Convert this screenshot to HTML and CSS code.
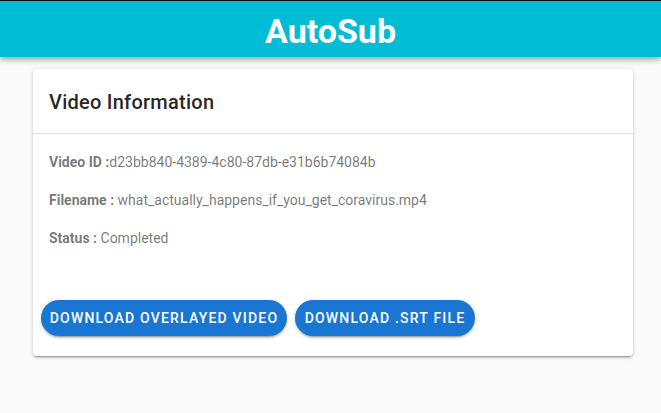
FILE: index.html
```html
<!DOCTYPE html>
<html>
<head>
<meta charset="utf-8">
<link rel="stylesheet" href="styles.css">
</head>
<body>
<header class="appbar"><h1 class="brand">AutoSub</h1></header>
<main class="content">
  <section class="card">
    <div class="card-title">Video Information</div>
    <div class="card-text">
      <p><b>Video ID :</b>d23bb840-4389-4c80-87db-e31b6b74084b</p>
      <p><b>Filename :</b> what_actually_happens_if_you_get_coravirus.mp4</p>
      <p><b>Status :</b> Completed</p>
    </div>
    <div class="card-actions">
      <button class="btn btn-video">Download Overlayed Video</button>
      <button class="btn btn-srt">Download .srt file</button>
    </div>
  </section>
</main>
</body>
</html>
```
FILE: styles.css
```css
html, body { margin: 0; padding: 0; }
body {
  background: #fafafa;
  font-family: Roboto, "Noto Sans", sans-serif;
  height: 413px;
  overflow: hidden;
}
.appbar {
  background: #00bcd4;
  border-top: 1px solid #111;
  height: 56px;
  display: flex;
  align-items: center;
  justify-content: center;
  box-shadow: 0 2px 4px -1px rgba(0,0,0,.2), 0 4px 5px 0 rgba(0,0,0,.14), 0 1px 10px 0 rgba(0,0,0,.12);
  position: relative;
}
.brand {
  margin: 0;
  color: #fff;
  font-size: 34px;
  font-weight: 700;
  line-height: 1;
  padding-top: 3px;
}
.content {
  padding: 12px 28px 0 33px;
}
.card {
  background: #fff;
  border-radius: 4px;
  box-shadow: 0 3px 1px -2px rgba(0,0,0,.2), 0 2px 2px 0 rgba(0,0,0,.14), 0 1px 5px 0 rgba(0,0,0,.12);
  width: 600px;
}
.card-title {
  padding: 17px 16px 15px;
  font-size: 20px;
  font-weight: 500;
  line-height: 32px;
  color: rgba(0,0,0,.87);
  border-bottom: 1px solid rgba(0,0,0,.12);
  letter-spacing: .0125em;
}
.card-text {
  padding: 17px 16px 27px;
  font-size: 14px;
  line-height: 22px;
  color: rgba(0,0,0,.54);
}
.card-text p { margin: 0 0 16px; }
.card-text b { font-weight: 700; }
.card-actions {
  display: flex;
  gap: 8px;
  padding: 8px 8px 20px;
}
.btn {
  height: 36px;
  border: none;
  border-radius: 18px;
  background: #1976d2;
  color: #fff;
  font-family: Roboto, sans-serif;
  font-size: 14px;
  font-weight: 500;
  letter-spacing: 1.2px;
  text-transform: uppercase;
  white-space: nowrap;
  padding: 0;
  text-align: center;
  box-shadow: 0 3px 1px -2px rgba(0,0,0,.2), 0 2px 2px 0 rgba(0,0,0,.14), 0 1px 5px 0 rgba(0,0,0,.12);
}
.btn-video { width: 246px; }
.btn-srt { width: 180px; }
```
